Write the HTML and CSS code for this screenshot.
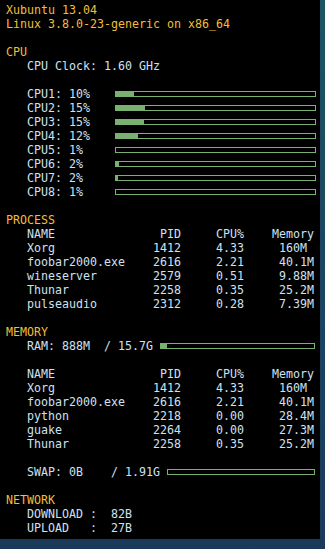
FILE: index.html
```html
<!DOCTYPE html>
<html>
<head>
<meta charset="utf-8">
<link rel="stylesheet" href="styles.css">
</head>
<body>
<div class="panel">
  <div class="l h">Xubuntu 13.04</div>
  <div class="l h">Linux 3.8.0-23-generic on x86_64</div>
  <div class="l"></div>
  <div class="l h">CPU</div>
  <div class="l">   CPU Clock: 1.60 GHz</div>
  <div class="l"></div>
  <div class="l row"><span class="lab lab-cpu">   CPU1: 10%</span><div class="bar bar-cpu"><div class="fill" style="width:18px"></div></div></div>
  <div class="l row"><span class="lab lab-cpu">   CPU2: 15%</span><div class="bar bar-cpu"><div class="fill" style="width:29px"></div></div></div>
  <div class="l row"><span class="lab lab-cpu">   CPU3: 15%</span><div class="bar bar-cpu"><div class="fill" style="width:28px"></div></div></div>
  <div class="l row"><span class="lab lab-cpu">   CPU4: 12%</span><div class="bar bar-cpu"><div class="fill" style="width:22px"></div></div></div>
  <div class="l row"><span class="lab lab-cpu">   CPU5: 1%</span><div class="bar bar-cpu"><div class="fill" style="width:0px"></div></div></div>
  <div class="l row"><span class="lab lab-cpu">   CPU6: 2%</span><div class="bar bar-cpu"><div class="fill" style="width:3px"></div></div></div>
  <div class="l row"><span class="lab lab-cpu">   CPU7: 2%</span><div class="bar bar-cpu"><div class="fill" style="width:2px"></div></div></div>
  <div class="l row"><span class="lab lab-cpu">   CPU8: 1%</span><div class="bar bar-cpu"><div class="fill" style="width:0px"></div></div></div>
  <div class="l"></div>
  <div class="l h">PROCESS</div>
  <div class="l">   NAME               PID     CPU%    Memory</div>
  <div class="l">   Xorg              1412     4.33     160M</div>
  <div class="l">   foobar2000.exe    2616     2.21     40.1M</div>
  <div class="l">   wineserver        2579     0.51     9.88M</div>
  <div class="l">   Thunar            2258     0.35     25.2M</div>
  <div class="l">   pulseaudio        2312     0.28     7.39M</div>
  <div class="l"></div>
  <div class="l h">MEMORY</div>
  <div class="l row"><span class="lab lab-ram">   RAM: 888M  / 15.7G</span><div class="bar bar-ram"><div class="fill" style="width:6px"></div></div></div>
  <div class="l"></div>
  <div class="l">   NAME               PID     CPU%    Memory</div>
  <div class="l">   Xorg              1412     4.33     160M</div>
  <div class="l">   foobar2000.exe    2616     2.21     40.1M</div>
  <div class="l">   python            2218     0.00     28.4M</div>
  <div class="l">   guake             2264     0.00     27.3M</div>
  <div class="l">   Thunar            2258     0.35     25.2M</div>
  <div class="l"></div>
  <div class="l row"><span class="lab lab-swap">   SWAP: 0B    / 1.91G</span><div class="bar bar-swap"><div class="fill" style="width:0px"></div></div></div>
  <div class="l"></div>
  <div class="l h">NETWORK</div>
  <div class="l">   DOWNLOAD :  82B</div>
  <div class="l">   UPLOAD   :  27B</div>
</div>
</body>
</html>
```
FILE: styles.css
```css
html, body {
  margin: 0;
  padding: 0;
}
body {
  width: 325px;
  height: 549px;
  background: linear-gradient(180deg, #1d5464 0%, #1c4660 45%, #1b3a5a 100%);
  overflow: hidden;
}
.panel {
  width: 320px;
  height: 539px;
  box-sizing: border-box;
  background: #000;
  padding: 3px 0 0 6px;
  font-family: "DejaVu Sans Mono", "Liberation Mono", monospace;
  font-size: 11.63px;
  color: #cfe0f2;
}
.l {
  height: 14px;
  line-height: 14px;
  white-space: pre;
}
.h {
  color: #f3bd38;
}
.row {
  display: flex;
  align-items: flex-start;
}
.lab {
  flex: none;
}
.lab-cpu { width: 109px; }
.lab-ram { width: 154px; }
.lab-swap { width: 161px; }
.bar {
  flex: none;
  height: 6px;
  margin-top: 4px;
  box-sizing: border-box;
  border: 1px solid #78b170;
}
.bar-cpu { width: 201px; }
.bar-ram { width: 155px; }
.bar-swap { width: 148px; }
.fill {
  height: 100%;
  background: #78b170;
}
```
